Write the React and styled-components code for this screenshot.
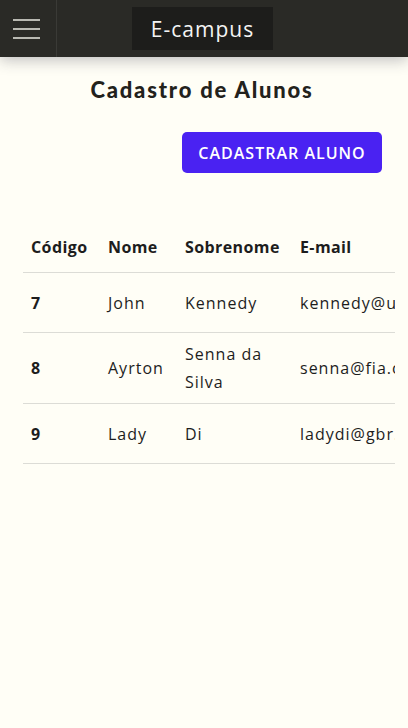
import React from "react";
import styled, { createGlobalStyle } from "styled-components";

const GlobalStyle = createGlobalStyle`
  body {
    margin: 0;
    background: #fffef6;
    font-family: "Open Sans", "DejaVu Sans", sans-serif;
    color: #1d1d1d;
  }
`;

const alunos = [
  { codigo: 7, nome: "John", sobrenome: "Kennedy", email: "kennedy@usa.gov" },
  { codigo: 8, nome: "Ayrton", sobrenome: "Senna da Silva", email: "senna@fia.com" },
  { codigo: 9, nome: "Lady", sobrenome: "Di", email: "ladydi@gbr.uk" }
];

export default function App() {
  return (
    <Page>
      <GlobalStyle />
      <Header>
        <MenuButton aria-label="menu">
          <span />
          <span />
          <span />
        </MenuButton>
        <Brand>E-campus</Brand>
      </Header>

      <Main>
        <Title>Cadastro de Alunos</Title>
        <Actions>
          <PrimaryButton type="button">Cadastrar Aluno</PrimaryButton>
        </Actions>

        <TableWrapper>
          <Table>
            <thead>
              <tr>
                <Th width={77}>Código</Th>
                <Th width={77}>Nome</Th>
                <Th width={115}>Sobrenome</Th>
                <Th>E-mail</Th>
              </tr>
            </thead>
            <tbody>
              {alunos.map(aluno => (
                <Row key={aluno.codigo}>
                  <Td bold>{aluno.codigo}</Td>
                  <Td>{aluno.nome}</Td>
                  <Td>{aluno.sobrenome}</Td>
                  <Td nowrap>{aluno.email}</Td>
                </Row>
              ))}
            </tbody>
          </Table>
        </TableWrapper>
      </Main>
    </Page>
  );
}

const Page = styled.div`
  min-height: 728px;
`;

const Header = styled.header`
  height: 57px;
  background: #2a2a26;
  display: flex;
  align-items: center;
  box-shadow: 0 3px 14px rgba(40, 40, 60, 0.3);
  position: relative;
`;

const MenuButton = styled.button`
  width: 57px;
  height: 57px;
  padding: 0 0 0 13px;
  border: none;
  border-right: 1px solid #3a3a36;
  background: transparent;
  display: flex;
  flex-direction: column;
  justify-content: center;
  gap: 7px;

  span {
    display: block;
    width: 27px;
    height: 2px;
    background: #b9b9b2;
  }
`;

const Brand = styled.h1`
  margin: 0 0 0 75px;
  width: 141px;
  height: 43px;
  background: #1d1d1b;
  color: #f4f4f4;
  font-family: "Open Sans", sans-serif;
  font-size: 21px;
  font-weight: 500;
  letter-spacing: 1px;
  display: flex;
  align-items: center;
  justify-content: center;
`;

const Main = styled.main`
  padding: 19px 13px 0 23px;
`;

const Title = styled.h2`
  margin: 0;
  padding-right: 14px;
  text-align: center;
  font-family: "Lato", sans-serif;
  font-weight: 900;
  font-size: 22px;
  letter-spacing: 1.8px;
  color: #23221c;
`;

const Actions = styled.div`
  display: flex;
  justify-content: flex-end;
  margin-top: 29px;
  padding-right: 13px;
`;

const PrimaryButton = styled.button`
  width: 200px;
  height: 41px;
  background: #4a22f2;
  color: #fff;
  border: none;
  border-radius: 5px;
  font-family: "Open Sans", sans-serif;
  font-size: 16px;
  font-weight: 600;
  letter-spacing: 1px;
  text-transform: uppercase;
`;

const TableWrapper = styled.div`
  margin-top: 44px;
  width: 372px;
  overflow: hidden;
`;

const Table = styled.table`
  border-collapse: collapse;
  table-layout: fixed;
  width: 440px;
  font-size: 16px;
  letter-spacing: 1px;
`;

const Th = styled.th`
  box-sizing: border-box;
  width: ${p => (p.width ? `${p.width}px` : "auto")};
  text-align: left;
  font-weight: 700;
  letter-spacing: 0.4px;
  line-height: 28px;
  padding: 16px 8px 11px;
  border-bottom: 1px solid #dcdcd6;
`;

const Row = styled.tr`
  height: 60px;
`;

const Td = styled.td`
  font-weight: ${p => (p.bold ? 700 : 500)};
  white-space: ${p => (p.nowrap ? "nowrap" : "normal")};
  line-height: 28px;
  padding: 7px 8px;
  border-bottom: 1px solid #dcdcd6;
  vertical-align: middle;
`;
